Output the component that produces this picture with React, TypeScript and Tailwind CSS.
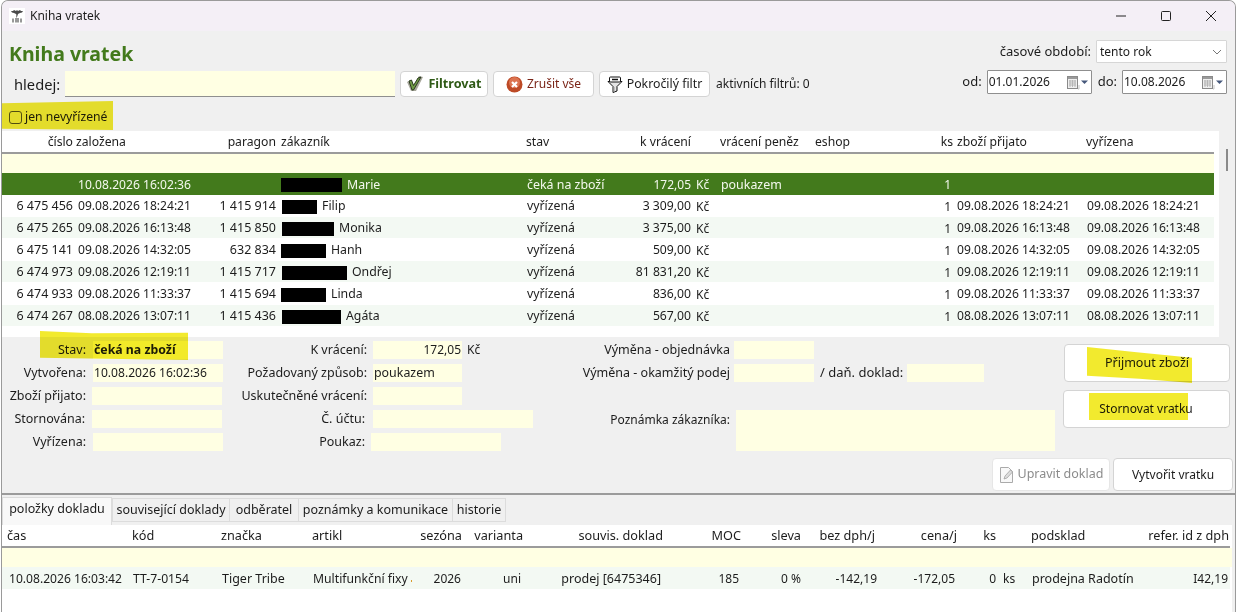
import type { ReactNode } from "react";

const rows = [
  { no: "6 475 456", at: "09.08.2026 18:24:21", par: "1 415 914", bar: "w-[35px] ml-[1px]", name: "Filip", st: "vyřízená", amt: "3 309,00" },
  { no: "6 475 265", at: "09.08.2026 16:13:48", par: "1 415 850", bar: "w-[52px] ml-[1px]", name: "Monika", st: "vyřízená", amt: "3 375,00" },
  { no: "6 475 141", at: "09.08.2026 14:32:05", par: "632 834", bar: "w-[45px]", name: "Hanh", st: "vyřízená", amt: "509,00" },
  { no: "6 474 973", at: "09.08.2026 12:19:11", par: "1 415 717", bar: "w-[65px] ml-[1px]", name: "Ondřej", st: "vyřízená", amt: "81 831,20" },
  { no: "6 474 933", at: "09.08.2026 11:33:37", par: "1 415 694", bar: "w-[45px]", name: "Linda", st: "vyřízená", amt: "836,00" },
  { no: "6 474 267", at: "08.08.2026 13:07:11", par: "1 415 436", bar: "w-[59px] ml-[1px]", name: "Agáta", st: "vyřízená", amt: "567,00" },
];

const mainCols = "grid grid-cols-[71px_149px_54px_250px_108px_57px_29px_95px_120px_18px_133px_128px] items-center w-[1212px]";
const subCols = "grid grid-cols-[128px_89px_91px_102px_51px_62px_138px_79px_60px_75px_81px_39px_32px_121px_80px] items-center w-[1228px]";

function Cell({ children, right, className = "" }: { children?: ReactNode; right?: boolean; className?: string }) {
  return <div className={`flex whitespace-nowrap ${right ? "justify-end" : ""} ${className}`}>{children}</div>;
}

function MainRow({ row, striped }: { row: (typeof rows)[number]; striped: boolean }) {
  return (
    <div className={`${mainCols} h-[22px] pt-[2px] border-b border-white ${striped ? "bg-[#f3f9f3]" : "bg-white"}`}>
      <Cell right className="text-[12.5px]">{row.no}</Cell>
      <Cell className="pl-[5px] text-[12.1px]">{row.at}</Cell>
      <Cell right className="text-[12.5px]">{row.par}</Cell>
      <Cell className="pl-[5px] items-center text-[12.3px]">
        <span className={`h-[14px] bg-black ${row.bar}`} />
        <span className="ml-[5px]">{row.name}</span>
      </Cell>
      <Cell className="pl-[1px] text-[12.3px]">{row.st}</Cell>
      <Cell right className="text-[12.2px]">{row.amt}</Cell>
      <Cell className="pl-[5px]">Kč</Cell>
      <Cell />
      <Cell />
      <Cell right className="pr-[2px]">1</Cell>
      <Cell className="pl-[4px] text-[12.1px]">{row.at}</Cell>
      <Cell className="pl-[1px] text-[12.1px]">{row.at}</Cell>
    </div>
  );
}

function Field({ className = "", children }: { className?: string; children?: ReactNode }) {
  return <div className={`h-[18px] bg-[#ffffe3] flex items-center px-[1px] whitespace-nowrap ${className}`}>{children}</div>;
}

function FormRow({ label, labelClass, children }: { label: string; labelClass: string; children: ReactNode }) {
  return (
    <div className="flex items-center h-[18px] whitespace-nowrap">
      <div className={`text-right text-[12.5px] pt-[1px] ${labelClass}`}>{label}</div>
      {children}
    </div>
  );
}

function Btn({ className = "", children }: { className?: string; children: ReactNode }) {
  return (
    <button className={`flex items-center justify-center gap-[4px] rounded-[4px] border border-[#d4d4d4] bg-white whitespace-nowrap ${className}`}>
      {children}
    </button>
  );
}

function CalendarDrop() {
  return (
    <svg width="26" height="15" viewBox="0 0 26 15" className="shrink-0">
      <rect x="2.500" y="1.500" width="10" height="12" fill="#efefef" stroke="#8a8a8a" />
      <rect x="3" y="2" width="9" height="2" fill="#9a9a9a" />
      <path d="M4 6h7M4 8h7M4 10h7M5 5v7M7.500 5v7M10 5v7" stroke="#adadad" strokeWidth="0.8" />
      <path d="M13 14h1v-4" stroke="#c4c4c4" fill="none" />
      <path d="M16 5.500h7l-3.500 3.500z" fill="#46587c" />
    </svg>
  );
}

function Highlight({ className }: { className: string }) {
  return <div className={`absolute bg-[#f2ea2e] mix-blend-multiply pointer-events-none ${className}`} />;
}

export default function App() {
  return (
    <div className="relative w-[1236px] h-[612px] overflow-hidden bg-white text-[12px] text-[#1c1c1c] font-['Noto_Sans',sans-serif]">
      <div className="ml-px h-[612px] flex flex-col bg-[#f0f0f0] border-l border-r border-t border-[#9a9a9a] rounded-t-[7px] overflow-hidden">
        {/* title bar */}
        <div className="h-[30px] shrink-0 flex items-center bg-[#f4eff6] pl-[7px]">
          <svg width="16" height="16" viewBox="0 0 16 16" className="shrink-0">
            <rect width="16" height="16" fill="#fff" />
            <path d="M8 2l1 1 2-1 1 1 2 0-1 1.500-2 .5-2 1-1 3-1-3-2-1-2-.5-1-1.500 2 0 1-1 2 1z" fill="#4a4a4a" />
            <path d="M4 10.500v4M7 10v4.500M9 10v4.500M12 10.500v4" stroke="#333" />
            <path d="M7.500 6.500v3" stroke="#888" />
          </svg>
          <span className="ml-[5px]">Kniha vratek</span>
          <div className="ml-auto flex items-center pr-[2px]">
            <div className="w-[45px] flex justify-center">
              <svg width="10" height="10" viewBox="0 0 10 10"><path d="M0 5h10" stroke="#222" /></svg>
            </div>
            <div className="w-[45px] flex justify-center">
              <svg width="10" height="10" viewBox="0 0 10 10"><rect x="0.5" y="0.5" width="9" height="9" rx="1" fill="none" stroke="#222" /></svg>
            </div>
            <div className="w-[45px] flex justify-center">
              <svg width="10" height="10" viewBox="0 0 10 10"><path d="M0 0l10 10M10 0L0 10" stroke="#222" /></svg>
            </div>
          </div>
        </div>

        {/* filters */}
        <div className="h-[100px] shrink-0 flex justify-between">
          <div className="flex flex-col">
            <div className="h-[40px] pl-[7px] pt-[9px] text-[19.5px] leading-[28px] font-bold text-[#437a1c]">Kniha vratek</div>
            <div className="h-[26px] flex items-center pl-[12px]">
              <span className="text-[14.7px] w-[51px]">hledej:</span>
              <div className="w-[330px] h-[26px] bg-[#ffffe3] border-b border-[#8f8f8f]" />
              <Btn className="ml-[5px] w-[88px] h-[26px] text-[12.6px] font-bold text-[#2f5a16]">
                <svg width="18" height="18" viewBox="0 0 18 18" className="shrink-0">
                  <path d="M1 7l4-2 3 5 5-9 4 1-7 14H5z" fill="#a7a79b" />
                  <path d="M3 6l3 9h1.500L15 2l-3 1-4.500 7.500L5.500 5z" fill="#6f9a45" stroke="#22301a" strokeWidth="0.9" />
                </svg>
                Filtrovat
              </Btn>
              <Btn className="ml-[5px] w-[101px] h-[26px] text-[#7a2417]">
                <svg width="17" height="17" viewBox="0 0 17 17" className="shrink-0">
                  <circle cx="8.500" cy="8.500" r="8" fill="#bd4a26" />
                  <circle cx="8.500" cy="6.500" r="5.500" fill="#dc7350" />
                  <path d="M6 6l5 5M11 6l-5 5" stroke="#fff" strokeWidth="2.200" />
                </svg>
                Zrušit vše
              </Btn>
              <Btn className="ml-[5px] w-[111px] h-[26px] text-[12.3px]">
                <svg width="16" height="17" viewBox="0 0 16 17" className="shrink-0">
                  <path d="M1 5.500h14l-5 5v4.500l-4 1.500v-6z" fill="#e4e4e4" stroke="#111" />
                  <path d="M7 11v5" stroke="#999" />
                  <rect x="2.500" y="1" width="11" height="5" rx="1" fill="#fff" stroke="#111" />
                  <path d="M5 3.500h6" stroke="#111" strokeWidth="1.500" />
                </svg>
                Pokročilý filtr
              </Btn>
              <span className="ml-[6px]">aktivních filtrů: 0</span>
            </div>
            <div className="flex items-center pl-[7px] mt-[11px]">
              <span className="w-[13px] h-[13px] rounded-[3px] border border-[#555] bg-transparent" />
              <span className="ml-[3px] text-[12.2px]">jen nevyřízené</span>
            </div>
          </div>
          <div className="flex flex-col items-end pt-[9px] pr-[8px]">
            <div className="flex items-center">
              <span className="mr-[5px] text-[13px]">časové období:</span>
              <div className="w-[131px] h-[23px] bg-white border border-[#d6d6d6] flex items-center pl-[3px] pr-[4px] justify-between rounded-[1px]">
                tento rok
                <svg width="10" height="6" viewBox="0 0 10 6"><path d="M1 1l4 4 4-4" fill="none" stroke="#777" /></svg>
              </div>
            </div>
            <div className="flex items-center mt-[7px]">
              <span className="mr-[5px] text-[13px]">od:</span>
              <div className="w-[105px] h-[24px] bg-white border border-[#8f8f8f] flex items-center pl-[1px] justify-between rounded-[1px]">
                01.01.2026
                <CalendarDrop />
              </div>
              <span className="ml-[6px] mr-[5px] text-[13px]">do:</span>
              <div className="w-[105px] h-[24px] bg-white border border-[#8f8f8f] flex items-center pl-[1px] justify-between rounded-[1px]">
                10.08.2026
                <CalendarDrop />
              </div>
            </div>
          </div>
        </div>

        {/* returns table */}
        <div className="h-[206px] shrink-0 flex relative">
          <div className="w-[1217px] h-[206px] bg-white">
            <div className={`${mainCols} h-[23px] pt-[2px] border-b-2 border-[#9b9b9b] text-[12.2px]`}>
              <Cell right>číslo</Cell>
              <Cell className="pl-[3px]">založena</Cell>
              <Cell right>paragon</Cell>
              <Cell className="pl-[5px]">zákazník</Cell>
              <Cell>stav</Cell>
              <Cell right>k vrácení</Cell>
              <Cell />
              <Cell>vrácení peněz</Cell>
              <Cell>eshop</Cell>
              <Cell right>ks</Cell>
              <Cell className="pl-[4px]">zboží přijato</Cell>
              <Cell>vyřízena</Cell>
            </div>
            <div className="w-[1212px] h-[19px] bg-[#ffffe3]" />
            <div className={`${mainCols} h-[22px] pt-[2px] bg-[#437a1c] text-[#f4f8ee]`}>
              <Cell />
              <Cell className="pl-[5px] text-[12.1px]">10.08.2026 16:02:36</Cell>
              <Cell />
              <Cell className="pl-[5px] items-center text-[12.3px]">
                <span className="h-[14px] w-[61px] bg-black" />
                <span className="ml-[5px]">Marie</span>
              </Cell>
              <Cell className="pl-[1px] text-[12.4px]">čeká na zboží</Cell>
              <Cell right>172,05</Cell>
              <Cell className="pl-[5px]">Kč</Cell>
              <Cell className="pl-[1px] text-[12.4px]">poukazem</Cell>
              <Cell />
              <Cell right className="pr-[2px]">1</Cell>
              <Cell />
              <Cell />
            </div>
            {rows.map((r, i) => (
              <MainRow key={r.no} row={r} striped={i % 2 === 1} />
            ))}
          </div>
          {/* scrollbar thumb */}
          <div className="absolute left-[1224px] top-[18px] w-[2px] h-[22px] bg-[#8a8a8a]" />
        </div>

        {/* detail form */}
        <div className="h-[156px] shrink-0 flex flex-col">
          <div className="flex">
            <div className="w-[221px] pt-[4px] flex flex-col gap-[5px]">
              <FormRow label="Stav:" labelClass="w-[84px] mr-[7px]"><Field className="w-[130px] font-bold text-[12.3px]">čeká na zboží</Field></FormRow>
              <FormRow label="Vytvořena:" labelClass="w-[84px] mr-[7px]"><Field className="w-[130px] text-[12.1px]">10.08.2026 16:02:36</Field></FormRow>
              <FormRow label="Zboží přijato:" labelClass="w-[84px] mr-[6px]"><Field className="w-[130px]" /></FormRow>
              <FormRow label="Stornována:" labelClass="w-[83px] mr-[7px]"><Field className="w-[130px]" /></FormRow>
              <FormRow label="Vyřízena:" labelClass="w-[84px] mr-[7px]"><Field className="w-[130px]" /></FormRow>
            </div>
            <div className="w-[310px] pt-[4px] flex flex-col gap-[5px]">
              <FormRow label="K vrácení:" labelClass="w-[144px] mr-[6px]">
                <Field className="w-[89px] justify-end">172,05</Field>
                <span className="ml-[5px]">Kč</span>
              </FormRow>
              <FormRow label="Požadovaný způsob:" labelClass="w-[144px] mr-[6px]"><Field className="w-[89px] text-[12.4px]">poukazem</Field></FormRow>
              <FormRow label="Uskutečněné vrácení:" labelClass="w-[144px] mr-[6px]"><Field className="w-[89px]" /></FormRow>
              <FormRow label="Č. účtu:" labelClass="w-[142px] mr-[8px]"><Field className="w-[160px]" /></FormRow>
              <FormRow label="Poukaz:" labelClass="w-[142px] mr-[6px]"><Field className="w-[130px]" /></FormRow>
            </div>
            <div className="w-[522px] pt-[4px] flex flex-col gap-[5px]">
              <FormRow label="Výměna - objednávka" labelClass="w-[197px] mr-[4px]"><Field className="w-[80px]" /></FormRow>
              <FormRow label="Výměna - okamžitý podej" labelClass="w-[197px] mr-[4px]">
                <Field className="w-[80px]" />
                <span className="ml-[6px] w-[87px] text-[13px]">/ daň. doklad:</span>
                <Field className="w-[77px]" />
              </FormRow>
              <div className="h-[18px]" />
              <div className="flex">
                <div className="w-[197px] mr-[6px] text-right h-[18px] leading-[18px] pt-[1px]">Poznámka zákazníka:</div>
                <div className="w-[319px] h-[41px] bg-[#ffffe3]" />
              </div>
            </div>
            <div className="pt-[7px] pl-[8px] flex flex-col gap-[8px]">
              <Btn className="w-[166px] h-[38px] ml-[1px] text-[12.5px]">Přijmout zboží</Btn>
              <Btn className="w-[167px] h-[38px] pr-[1px]">Stornovat vratku</Btn>
            </div>
          </div>
          <div className="flex justify-end gap-[3px] pr-[2px] mt-[7px]">
            <Btn className="w-[118px] h-[33px] border-[#e6e6e6] bg-[#f3f3f3] text-[#8c8c8c] text-[12.5px]">
              <svg width="15" height="18" viewBox="0 0 15 18" className="shrink-0">
                <path d="M1.500 1.500h8l4 4v11h-12z" fill="#f8f8f8" stroke="#aaa" />
                <path d="M5 13l1-3 5.500-6 2 2-5.500 6z" fill="#ddd" stroke="#999" strokeWidth="0.7" />
              </svg>
              Upravit doklad
            </Btn>
            <Btn className="w-[120px] h-[33px]">Vytvořit vratku</Btn>
          </div>
        </div>

        {/* tabs */}
        <div className="h-[2px] shrink-0 bg-[#9b9b9b]" />
        <div className="h-[30px] shrink-0 flex items-end pt-[2px] text-[12.5px]">
          <div className="w-[110px] h-[28px] bg-[#f8f8f8] border border-b-0 border-[#dcdcdc] flex items-center justify-center pb-[4px]">položky dokladu</div>
          <div className="w-[118px] h-[24px] mb-[3px] border border-[#dcdcdc] flex items-center justify-center pt-[1px]">související doklady</div>
          <div className="w-[69px] h-[24px] mb-[3px] border border-l-0 border-[#dcdcdc] flex items-center justify-center pt-[1px]">odběratel</div>
          <div className="w-[154px] h-[24px] mb-[3px] border border-l-0 border-[#dcdcdc] flex items-center justify-center pt-[1px]">poznámky a komunikace</div>
          <div className="w-[53px] h-[24px] mb-[3px] border border-l-0 border-[#dcdcdc] flex items-center justify-center pt-[1px]">historie</div>
        </div>

        {/* items table */}
        <div className="flex-1 bg-white w-[1230px]">
          <div className={`${subCols} h-[23px] border-b-2 border-[#9b9b9b] text-[12.7px]`}>
            <Cell className="pl-[5px]">čas</Cell>
            <Cell className="pl-[2px]">kód</Cell>
            <Cell className="pl-[2px]">značka</Cell>
            <Cell className="pl-[2px]">artikl</Cell>
            <Cell right className="-ml-[10px] pr-[1px]">sezóna</Cell>
            <Cell right className="pr-[2px]">varianta</Cell>
            <Cell right>souvis. doklad</Cell>
            <Cell right className="pr-[1px]">MOC</Cell>
            <Cell right className="pr-[1px]">sleva</Cell>
            <Cell right className="pr-[2px]">bez dph/j</Cell>
            <Cell right className="pr-[1px]">cena/j</Cell>
            <Cell right className="pr-[1px]">ks</Cell>
            <Cell />
            <Cell className="pl-[2px]">podsklad</Cell>
            <Cell right className="-ml-[20px] pr-[1px]">refer. id z dph</Cell>
          </div>
          <div className="h-[19px] bg-[#ffffe3]" />
          <div className={`${subCols} h-[22px] pt-[2px] bg-[#f3f9f3]`}>
            <Cell className="pl-[7px] text-[12.1px]">10.08.2026 16:03:42</Cell>
            <Cell className="pl-[3px] text-[12.2px]">TT-7-0154</Cell>
            <Cell className="pl-[3px] text-[12.5px]">Tiger Tribe</Cell>
            <Cell className="pl-[3px] items-center text-[12.2px]">
              Multifunkční fixy
              <span className="ml-[3px] mt-[4px] w-[1px] h-[2px] bg-[#d99a2b]" />
            </Cell>
            <Cell right className="pr-[2px]">2026</Cell>
            <Cell right className="pr-[4px]">uni</Cell>
            <Cell right className="pr-[2px] text-[12.5px]">prodej [6475346]</Cell>
            <Cell right className="pr-[3px]">185</Cell>
            <Cell right className="pr-[1px]">0 %</Cell>
            <Cell right>-142,19</Cell>
            <Cell right className="pr-[3px]">-172,05</Cell>
            <Cell right className="pr-[1px]">0</Cell>
            <Cell className="pl-[6px]">ks</Cell>
            <Cell className="pl-[3px] text-[12.5px]">prodejna Radotín</Cell>
            <Cell right className="pr-[2px]">I42,19</Cell>
          </div>
        </div>
      </div>

      {/* marker highlights drawn over the window */}
      <Highlight className="left-[2px] top-[101px] w-[111px] h-[29px] [clip-path:polygon(0_8%,100%_0,100%_100%,0_96%)]" />
      <Highlight className="left-[40px] top-[331px] w-[148px] h-[29px] [clip-path:polygon(0_0,35%_8%,100%_6%,100%_100%,0_92%)]" />
      <Highlight className="left-[1087px] top-[347px] w-[105px] h-[36px] [clip-path:polygon(0_0,45%_14%,100%_30%,100%_100%,50%_88%,0_80%)]" />
      <Highlight className="left-[1089px] top-[393px] w-[99px] h-[27px]" />
    </div>
  );
}
